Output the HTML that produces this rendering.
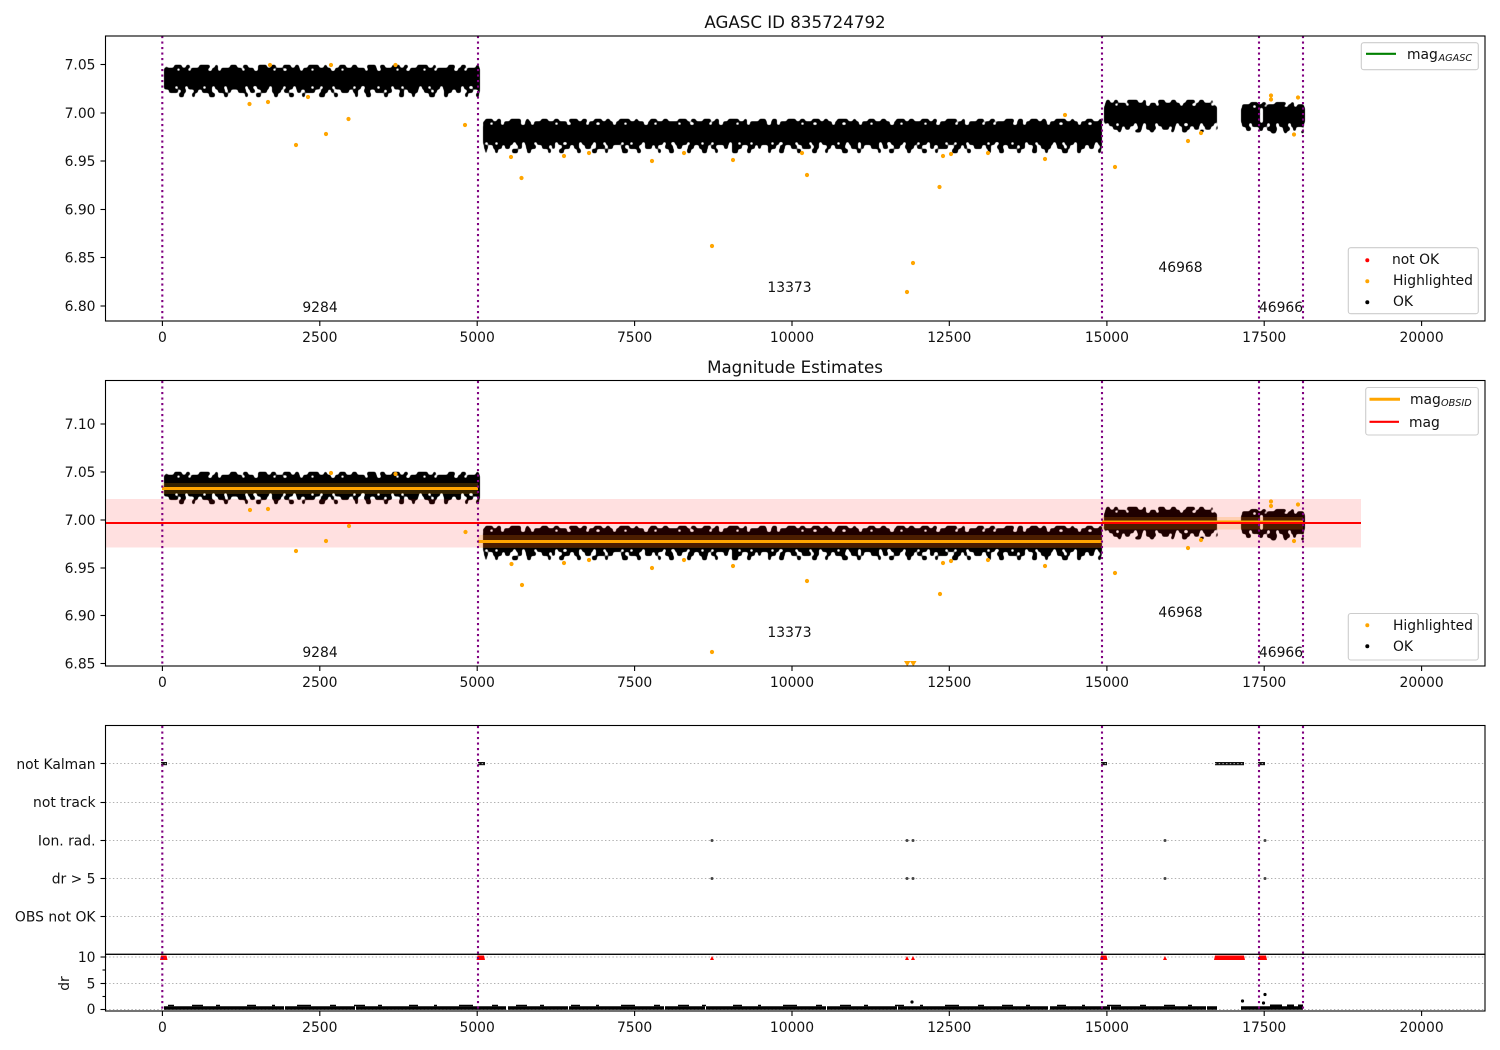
<!DOCTYPE html>
<html><head><meta charset="utf-8"><style>
html,body{margin:0;padding:0;background:#fff;width:1500px;height:1050px;overflow:hidden}
svg{display:block}
text{font-family:"DejaVu Sans","Liberation Sans",sans-serif;font-size:13.89px;fill:#111}
.t{font-size:16.67px;text-anchor:middle}
.m{text-anchor:middle}
.r{text-anchor:end}
.s{font-size:9.7px;font-style:italic}
.ax{fill:none;stroke:#000;stroke-width:1.1}
.tk line,.tk path{stroke:#000;stroke-width:1.1}
.vl line{stroke:#800080;stroke-width:2.1;stroke-dasharray:2.1 3.4}
.gr line{stroke:#b0b0b0;stroke-width:1;stroke-dasharray:1.4 2.3}
.leg{fill:#fff;fill-opacity:.85;stroke:#ccc;stroke-width:1.1}
.d line{stroke:#000}
.t1{stroke-dasharray:13 3 8 3 17 4 6 3 21 3 9 4 15 3 7 4}
.t2{stroke-dasharray:5 7 8 4 4 9 11 5 3 12 7 6 5 10 9 4}
.l1{stroke-dasharray:11 3 7 3 15 3 6 3 9 3 18 3 5 4 12 3}
.l2{stroke-dasharray:6 5 9 3 5 8 4 4 10 6 7 3 3 7 8 4 5 6}
.l3{stroke-dasharray:4 11 5 8 3 14 6 9 4 17 3 8 5 13}
</style></head><body>
<svg width="1500" height="1050" viewBox="0 0 1500 1050" xmlns="http://www.w3.org/2000/svg">
<defs>
<filter id="soft" x="-2%" y="-5%" width="104%" height="110%"><feGaussianBlur stdDeviation="1"/><feComponentTransfer><feFuncA type="linear" slope="3.5" intercept="-1.25"/></feComponentTransfer></filter>
<g id="data" class="d" filter="url(#soft)">
<!-- segment 1 -->
<rect x="164" y="71" width="316" height="15" fill="#000"/>
<line class="t1" x1="164" x2="480" y1="69.500" y2="69.500" stroke-width="3.500"/>
<line class="t2" x1="166" x2="479" y1="66.500" y2="66.500" stroke-width="3.500" stroke-dashoffset="4"/>
<line class="l1" x1="164" x2="480" y1="87.500" y2="87.500" stroke-width="4"/>
<line class="l2" x1="165" x2="480" y1="91" y2="91" stroke-width="4" stroke-dashoffset="7"/>
<line class="l3" x1="167" x2="479" y1="95" y2="95" stroke-width="4.500" stroke-dashoffset="3"/>
<!-- segment 2 -->
<rect x="483" y="125" width="619" height="17" fill="#000"/>
<line class="t1" x1="483" x2="1102" y1="123" y2="123" stroke-width="3.500" stroke-dashoffset="6"/>
<line class="t2" x1="485" x2="1102" y1="120.500" y2="120.500" stroke-width="3.500" stroke-dashoffset="12"/>
<line class="l1" x1="483" x2="1102" y1="143" y2="143" stroke-width="4" stroke-dashoffset="9"/>
<line class="l2" x1="484" x2="1102" y1="147" y2="147" stroke-width="4" stroke-dashoffset="2"/>
<line class="l3" x1="485" x2="1102" y1="151" y2="151" stroke-width="4.500" stroke-dashoffset="18"/>
<!-- segment 3 -->
<rect x="1104" y="106" width="113" height="17" fill="#000"/>
<line class="t1" x1="1105" x2="1215" y1="104.500" y2="104.500" stroke-width="3.500" stroke-dashoffset="3"/>
<line class="t2" x1="1106" x2="1213" y1="101.500" y2="101.500" stroke-width="3.500" stroke-dashoffset="16"/>
<line class="l1" x1="1105" x2="1218" y1="124.500" y2="124.500" stroke-width="3.500" stroke-dashoffset="10"/>
<line class="l2" x1="1107" x2="1218" y1="128" y2="128" stroke-width="3.500" stroke-dashoffset="5"/>
<line class="l3" x1="1110" x2="1216" y1="131" y2="131" stroke-width="3" stroke-dashoffset="20"/>
<!-- segment 4 -->
<rect x="1241" y="108" width="19" height="15" fill="#000"/><rect x="1263" y="107" width="42" height="16" fill="#000"/>
<line class="t1" x1="1242" x2="1304" y1="106" y2="106" stroke-width="3.500" stroke-dashoffset="2"/>
<line class="t2" x1="1246" x2="1304" y1="103.500" y2="103.500" stroke-width="3" stroke-dashoffset="8"/>
<line class="l1" x1="1242" x2="1304" y1="125" y2="125" stroke-width="4" stroke-dashoffset="14"/>
<line class="l2" x1="1244" x2="1304" y1="129" y2="129" stroke-width="4" stroke-dashoffset="21"/>
<line class="l3" x1="1262" x2="1304" y1="132" y2="132" stroke-width="3" stroke-dashoffset="6"/>
</g>
<g id="vl" class="vl"><line x1="162.3" x2="162.3" y1="0" y2="286"/><line x1="478" x2="478" y1="0" y2="286"/><line x1="1102" x2="1102" y1="0" y2="286"/><line x1="1259" x2="1259" y1="0" y2="286"/><line x1="1303" x2="1303" y1="0" y2="286"/></g>
<g id="xt" class="tk"><line x1="162.4" x2="162.4" y1="0" y2="5"/><line x1="319.8" x2="319.8" y1="0" y2="5"/><line x1="477.2" x2="477.2" y1="0" y2="5"/><line x1="634.6" x2="634.6" y1="0" y2="5"/><line x1="792" x2="792" y1="0" y2="5"/><line x1="949.3" x2="949.3" y1="0" y2="5"/><line x1="1106.9" x2="1106.9" y1="0" y2="5"/><line x1="1264.2" x2="1264.2" y1="0" y2="5"/><line x1="1421.6" x2="1421.6" y1="0" y2="5"/></g>
<g id="xl"><text class="m" x="162.4" y="0">0</text><text class="m" x="319.8" y="0">2500</text><text class="m" x="477.2" y="0">5000</text><text class="m" x="634.6" y="0">7500</text><text class="m" x="792" y="0">10000</text><text class="m" x="949.3" y="0">12500</text><text class="m" x="1106.9" y="0">15000</text><text class="m" x="1264.2" y="0">17500</text><text class="m" x="1421.6" y="0">20000</text></g>
<g id="an"><text class="m" x="320" y="0">9284</text><text class="m" x="789.500" y="-20">13373</text><text class="m" x="1180.5" y="-40">46968</text><text class="m" x="1281" y="0">46966</text></g>
</defs>

<text class="t" x="795" y="28">AGASC ID 835724792</text>
<text class="t" x="795" y="373">Magnitude Estimates</text>

<!-- axes 1 -->
<use href="#data"/>
<g fill="#ffa500">
<circle cx="249.5" cy="104" r="2.1"/><circle cx="268" cy="102" r="2.1"/><circle cx="296" cy="145" r="2.1"/><circle cx="326" cy="134" r="2.1"/><circle cx="348.5" cy="119" r="2.1"/><circle cx="465" cy="125" r="2.1"/><circle cx="511" cy="157" r="2.1"/><circle cx="521.5" cy="178" r="2.1"/><circle cx="564" cy="156" r="2.1"/><circle cx="589" cy="153" r="2.1"/><circle cx="652" cy="161" r="2.1"/><circle cx="684" cy="153" r="2.1"/><circle cx="733" cy="160" r="2.1"/><circle cx="807" cy="175" r="2.1"/><circle cx="802" cy="153" r="2.1"/><circle cx="712" cy="246" r="2.1"/><circle cx="907" cy="292" r="2.1"/><circle cx="913" cy="263" r="2.1"/><circle cx="939.5" cy="187" r="2.1"/><circle cx="943" cy="156" r="2.1"/><circle cx="951" cy="154" r="2.1"/><circle cx="988" cy="153" r="2.1"/><circle cx="1045" cy="159" r="2.1"/><circle cx="1065" cy="115" r="2.1"/><circle cx="1115" cy="167" r="2.1"/><circle cx="1188" cy="141" r="2.1"/><circle cx="1201" cy="133" r="2.1"/><circle cx="1271" cy="95.5" r="2.1"/><circle cx="1271" cy="99.5" r="2.1"/><circle cx="1298" cy="97.5" r="2.1"/><circle cx="1294" cy="134.5" r="2.1"/><circle cx="270" cy="65" r="2.1"/><circle cx="331" cy="65" r="2.1"/><circle cx="395.5" cy="65" r="2.1"/><circle cx="308" cy="97" r="2.1"/>
</g>
<use href="#vl" y="36"/>
<use href="#an" y="312"/>
<rect class="ax" x="105.5" y="36" width="1379.5" height="285"/>
<g class="tk"><line x1="100.5" x2="105.5" y1="64.5" y2="64.5"/><line x1="100.5" x2="105.5" y1="113" y2="113"/><line x1="100.5" x2="105.5" y1="161" y2="161"/><line x1="100.5" x2="105.5" y1="209.5" y2="209.5"/><line x1="100.5" x2="105.5" y1="257.5" y2="257.5"/><line x1="100.5" x2="105.5" y1="306" y2="306"/></g>
<g class="r"><text class="r" x="95.5" y="69.5">7.05</text><text class="r" x="95.5" y="118">7.00</text><text class="r" x="95.5" y="166">6.95</text><text class="r" x="95.5" y="214.5">6.90</text><text class="r" x="95.5" y="262.5">6.85</text><text class="r" x="95.5" y="311">6.80</text></g>
<use href="#xt" y="321"/><use href="#xl" y="342"/>
<rect class="leg" x="1361.3" y="42.7" width="117" height="27" rx="2.5"/>
<line x1="1366" x2="1396" y1="53.8" y2="53.8" stroke="#008000" stroke-width="2.1"/>
<text x="1407" y="59">mag</text><text class="s" x="1438.500" y="61">AGASC</text>
<rect class="leg" x="1348.3" y="247.7" width="130" height="66" rx="2.5"/>
<circle cx="1367.3" cy="260.3" r="2" fill="#f00"/><circle cx="1367.3" cy="281.3" r="2" fill="#ffa500"/><circle cx="1367.3" cy="302.3" r="2" fill="#000"/>
<text x="1392" y="264">not OK</text><text x="1393" y="285">Highlighted</text><text x="1393" y="306">OK</text>

<!-- axes 2 -->
<use href="#data" y="407"/>
<g fill="#ffa500" fill-opacity=".2">
<rect x="162" y="483" width="316" height="11"/><rect x="478" y="535" width="624" height="13"/><rect x="1102" y="517" width="201" height="12.5"/>
</g>
<rect x="105.5" y="499" width="1255.5" height="48.5" fill="#f00" fill-opacity=".12"/>
<g stroke="#ffa500" stroke-width="3"><line x1="162" x2="478" y1="488.5" y2="488.5"/><line x1="478" x2="1102" y1="541.5" y2="541.5"/><line x1="1102" x2="1303" y1="522" y2="522"/></g>
<line x1="105.5" x2="1361" y1="523" y2="523" stroke="#f00" stroke-width="2.1"/>
<g fill="#ffa500">
<circle cx="250" cy="510" r="2.1"/><circle cx="268" cy="509" r="2.1"/><circle cx="296" cy="551" r="2.1"/><circle cx="326" cy="541" r="2.1"/><circle cx="349" cy="526" r="2.1"/><circle cx="465.5" cy="532" r="2.1"/><circle cx="511.5" cy="564" r="2.1"/><circle cx="522" cy="585" r="2.1"/><circle cx="564" cy="563" r="2.1"/><circle cx="589" cy="560" r="2.1"/><circle cx="652" cy="568" r="2.1"/><circle cx="684" cy="560" r="2.1"/><circle cx="733" cy="566" r="2.1"/><circle cx="807" cy="581" r="2.1"/><circle cx="712" cy="652" r="2.1"/><circle cx="940" cy="594" r="2.1"/><circle cx="943" cy="563" r="2.1"/><circle cx="951" cy="561" r="2.1"/><circle cx="988" cy="560" r="2.1"/><circle cx="1045" cy="566" r="2.1"/><circle cx="1115" cy="573" r="2.1"/><circle cx="1188" cy="548" r="2.1"/><circle cx="1201" cy="540" r="2.1"/><circle cx="1271" cy="501.5" r="2.1"/><circle cx="1271" cy="506" r="2.1"/><circle cx="1298" cy="504.5" r="2.1"/><circle cx="1294" cy="541" r="2.1"/><circle cx="331" cy="473" r="2.1"/><circle cx="395.5" cy="474" r="2.1"/><path d="M904 661h6.500l-3.200 5.500zM910 661h6.500l-3.200 5.500z"/>
</g>
<use href="#vl" y="381"/>
<use href="#an" y="657"/>
<rect class="ax" x="105.5" y="380.5" width="1379.5" height="285.5"/>
<g class="tk"><line x1="100.5" x2="105.5" y1="424" y2="424"/><line x1="100.5" x2="105.5" y1="472" y2="472"/><line x1="100.5" x2="105.5" y1="520" y2="520"/><line x1="100.5" x2="105.5" y1="568" y2="568"/><line x1="100.5" x2="105.5" y1="615.5" y2="615.5"/><line x1="100.5" x2="105.5" y1="663.5" y2="663.5"/></g>
<text class="r" x="95.5" y="429">7.10</text><text class="r" x="95.5" y="477">7.05</text><text class="r" x="95.5" y="525">7.00</text><text class="r" x="95.5" y="573">6.95</text><text class="r" x="95.5" y="620.5">6.90</text><text class="r" x="95.5" y="668.5">6.85</text>
<use href="#xt" y="666"/><use href="#xl" y="687"/>
<rect class="leg" x="1365.7" y="387.5" width="112.6" height="47.5" rx="2.5"/>
<line x1="1369.5" x2="1400" y1="399.3" y2="399.3" stroke="#ffa500" stroke-width="3"/>
<line x1="1369.5" x2="1399" y1="421.8" y2="421.8" stroke="#f00" stroke-width="2.1"/>
<text x="1410" y="404">mag</text><text class="s" x="1441" y="406">OBSID</text><text x="1409" y="427">mag</text>
<rect class="leg" x="1348.3" y="613.5" width="130" height="46.5" rx="2.5"/>
<circle cx="1367.3" cy="625.3" r="2" fill="#ffa500"/><circle cx="1367.3" cy="646.3" r="2" fill="#000"/>
<text x="1393" y="630">Highlighted</text><text x="1393" y="651">OK</text>

<!-- axes 3 -->
<g class="gr"><line x1="105.5" x2="1485" y1="763.5" y2="763.5"/><line x1="105.5" x2="1485" y1="802.5" y2="802.5"/><line x1="105.5" x2="1485" y1="840.5" y2="840.5"/><line x1="105.5" x2="1485" y1="878.5" y2="878.5"/><line x1="105.5" x2="1485" y1="916.5" y2="916.5"/><line x1="105.5" x2="1485" y1="957" y2="957"/><line x1="105.5" x2="1485" y1="983.5" y2="983.5"/><line x1="105.5" x2="1485" y1="1009.5" y2="1009.5"/></g>
<g fill="none" stroke="#111" stroke-width="3.2">
<line x1="161" x2="167" y1="763.6" y2="763.6"/><line x1="478" x2="485" y1="763.6" y2="763.6"/><line x1="1101" x2="1107" y1="763.6" y2="763.6"/><line x1="1215" x2="1244" y1="763.6" y2="763.6"/><line x1="1258" x2="1265" y1="763.6" y2="763.6"/>
</g>
<g stroke="#b8b8b8" stroke-width="1" stroke-dasharray="1.4 2.3"><line x1="161" x2="167" y1="763.6" y2="763.6"/><line x1="478" x2="485" y1="763.6" y2="763.6"/><line x1="1101" x2="1107" y1="763.6" y2="763.6"/><line x1="1215" x2="1244" y1="763.6" y2="763.6"/><line x1="1258" x2="1265" y1="763.6" y2="763.6"/></g>
<g fill="#444">
<circle cx="712" cy="840.5" r="1.5"/><circle cx="907" cy="840.5" r="1.5"/><circle cx="913" cy="840.5" r="1.5"/><circle cx="1165" cy="840.5" r="1.5"/><circle cx="1265" cy="840.5" r="1.5"/>
<circle cx="712" cy="878.5" r="1.5"/><circle cx="907" cy="878.5" r="1.5"/><circle cx="913" cy="878.5" r="1.5"/><circle cx="1165" cy="878.5" r="1.5"/><circle cx="1265" cy="878.5" r="1.5"/>
</g>
<g fill="#f00">
<path d="M160 960l1-4.500h5.500l1 4.500zM476.500 960l1-4.500h6.500l1 4.500zM1100 960l1-4.500h5.500l1 4.500zM1214 960l1-4.500h29l1 4.500zM1258 960l1-4.500h7l1 4.500z"/>
<path d="M710 960l2-4 2 4zM905 960l2-4 2 4zM911 960l2-4 2 4zM1163 960l2-4 2 4z"/>
</g>
<g fill="none" stroke="#000">
<line x1="164" x2="1217" y1="1008" y2="1008" stroke-width="3.600" stroke-dasharray="120 1 70 1 150 2 60 1 95 1 40 1"/>
<line x1="168" x2="1217" y1="1005.5" y2="1005.5" stroke-width="1.600" stroke-dasharray="6 18 11 13 4 27 9 16 3 22 14 19"/>
<line x1="1241" x2="1303" y1="1008" y2="1008" stroke-width="3.600"/>
<line x1="1270" x2="1303" y1="1005.5" y2="1005.5" stroke-width="2" stroke-dasharray="12 5 7 4"/>
</g>
<g fill="#000"><circle cx="912" cy="1002" r="1.6"/><circle cx="1242.500" cy="1001" r="1.6"/><circle cx="1265" cy="994.500" r="1.6"/><circle cx="1263.500" cy="1003" r="1.6"/></g>
<g class="vl"><line x1="162.300" x2="162.300" y1="726" y2="1011"/><line x1="478" x2="478" y1="726" y2="1011"/><line x1="1102" x2="1102" y1="726" y2="1011"/><line x1="1259" x2="1259" y1="726" y2="1011"/><line x1="1303" x2="1303" y1="726" y2="1011"/></g>
<rect class="ax" x="105.500" y="725.500" width="1379.500" height="228.800"/>
<rect class="ax" x="105.500" y="954.300" width="1379.500" height="56.700"/>
<g class="tk"><line x1="100.500" x2="105.500" y1="763.500" y2="763.500"/><line x1="100.500" x2="105.500" y1="802.500" y2="802.500"/><line x1="100.500" x2="105.500" y1="840.500" y2="840.500"/><line x1="100.500" x2="105.500" y1="878.500" y2="878.500"/><line x1="100.500" x2="105.500" y1="916.500" y2="916.500"/><line x1="100.500" x2="105.500" y1="957" y2="957"/><line x1="100.500" x2="105.500" y1="983.500" y2="983.500"/><line x1="100.500" x2="105.500" y1="1009.500" y2="1009.500"/><line x1="102.500" x2="105.500" y1="970" y2="970"/><line x1="102.500" x2="105.500" y1="996.500" y2="996.500"/></g>
<text class="r" x="95.500" y="769">not Kalman</text><text class="r" x="95.500" y="807">not track</text><text class="r" x="95.500" y="845.500">Ion. rad.</text><text class="r" x="95.500" y="883.500">dr &gt; 5</text><text class="r" x="95.500" y="921.500">OBS not OK</text>
<text class="r" x="95.500" y="962">10</text><text class="r" x="95.500" y="988.500">5</text><text class="r" x="95.500" y="1014">0</text>
<text class="m" transform="translate(69,983.500) rotate(-90)" x="0" y="0">dr</text>
<use href="#xt" y="1011"/><use href="#xl" y="1032"/>
</svg>
</body></html>
